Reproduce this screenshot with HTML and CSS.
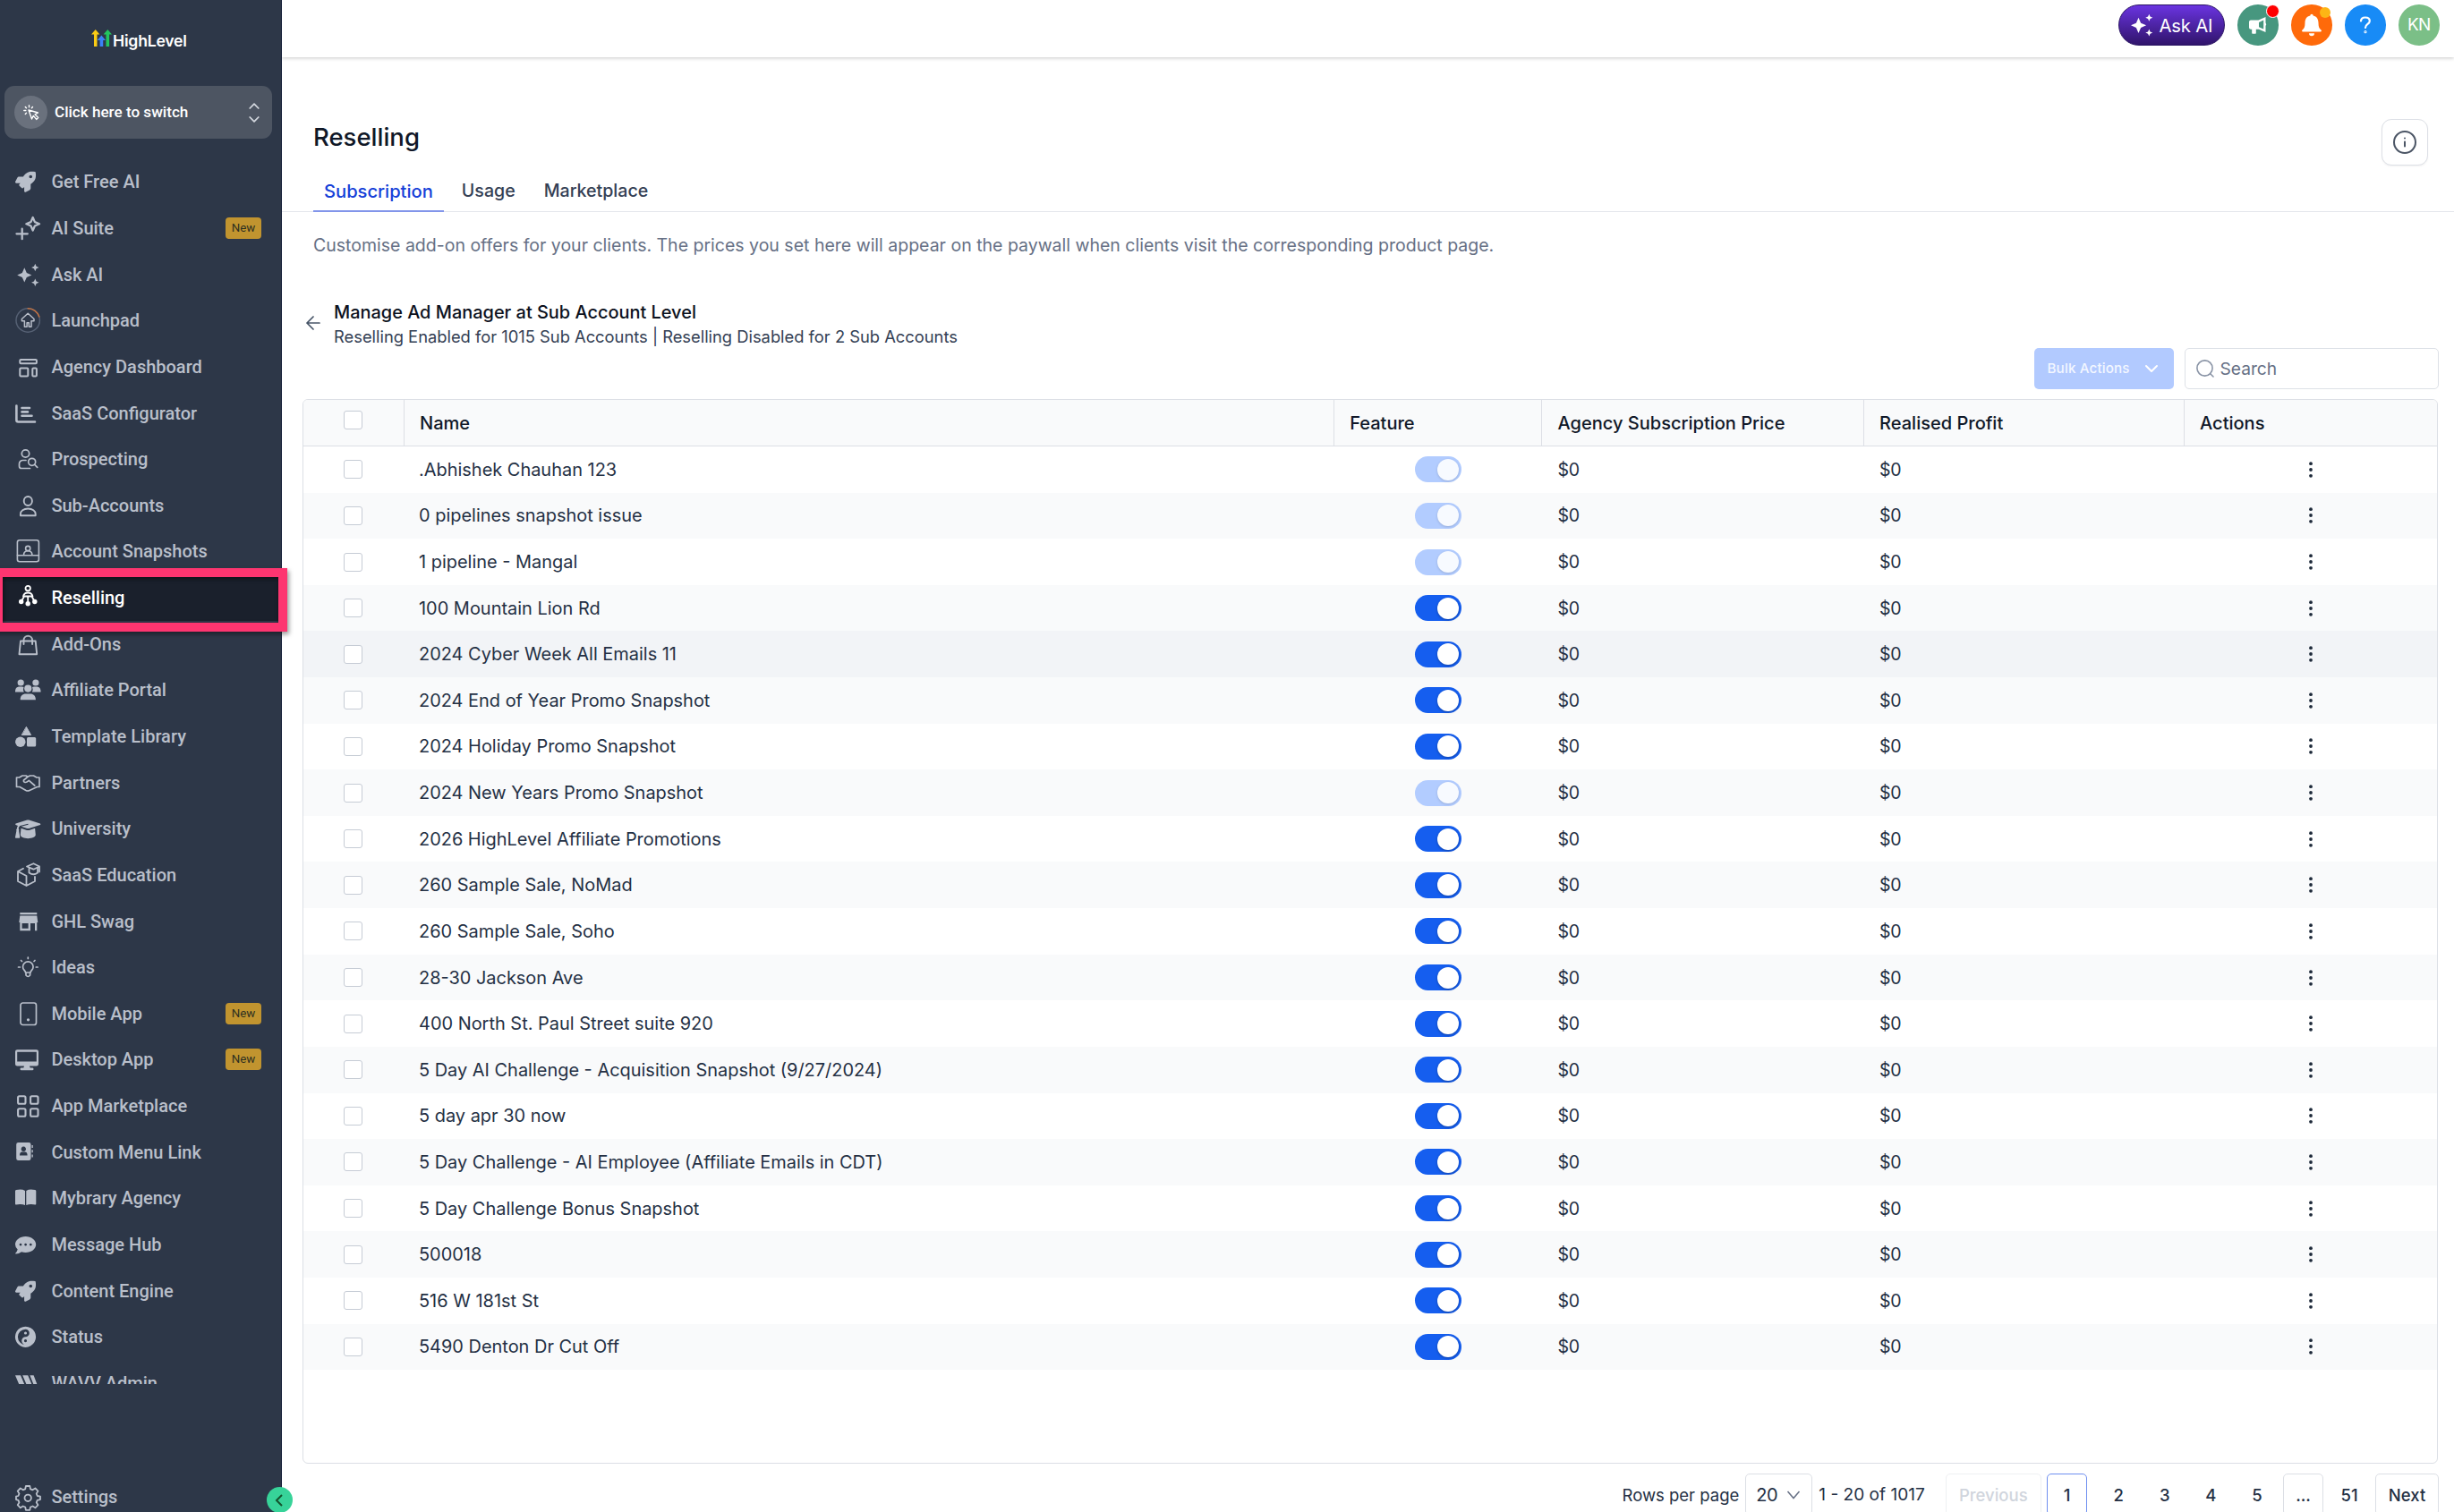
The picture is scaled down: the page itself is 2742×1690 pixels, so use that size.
FILE: index.html
```
<!DOCTYPE html>
<html lang="en">
<head>
    <meta charset="UTF-8">
    <meta name="viewport" content="width=device-width, initial-scale=1.0">
    <title>Reselling</title>
    <link rel="stylesheet" href="styles.css">
</head>
<body>
    <div class="app">
        <aside class="sidebar">
            <div class="logo">
                <svg width="23" height="20" viewBox="0 0 23 20">
                    <path fill="#facc15" d="M0 5.500L4.700 0l4.700 5.500H6.500V19H3V5.500z"/>
                    <path fill="#3b82f6" d="M6.600 12l4.800-5.500 4.600 5.500h-2.800v7H9.600v-7z"/>
                    <path fill="#22c55e" d="M13.600 5.500L18.300 0 23 5.500h-2.900V19h-3.600V5.500z"/>
                </svg>
                <span>HighLevel</span>
            </div>

            <div class="switcher">
                <span class="switcher-icon">
                    <svg width="18" height="18" viewBox="0 0 18 18" fill="none" stroke="#fff" stroke-width="1.400" stroke-linecap="round" stroke-linejoin="round">
                        <path d="M6 6l3.500 10 1.800-3.600 3.400 4 2-1.900-3.600-3.600L16.500 9z"/>
                        <path d="M6.500.8v2M2.300 2.500l1.200 1.300M.8 6.500h2M2.300 10.500l1.200-1.200M10.500 2.500L9.400 3.800"/>
                    </svg>
                </span>
                <span class="switcher-text">Click here to switch</span>
                <svg width="12" height="22" viewBox="0 0 12 22" fill="none" stroke="#d5d9e0" stroke-width="1.700" stroke-linecap="round" stroke-linejoin="round">
                    <path d="M1.200 6L6 1.200 10.800 6M1.200 16L6 20.800 10.800 16"/>
                </svg>
            </div>

            <nav class="menu">
                <a class="item">
                    <svg class="fill" viewBox="0 0 28 28"><path transform="translate(0 2.700) scale(.045)" d="M505.120 19.090c-1.190-5.530-6.660-11-12.210-12.190C460.720 0 435.510 0 410.410 0 307.180 0 245.270 55.200 199.050 128H94.840c-16.350.02-35.560 11.880-42.890 26.480L2.520 253.300A28.400 28.400 0 0 0 0 264a24 24 0 0 0 24 24h103.800l-22.470 22.470c-11.370 11.360-13 32.260 0 45.250l50.900 50.900c11.160 11.190 32.160 13.150 45.280 0L224 384.160V488a24 24 0 0 0 24 24 28.560 28.560 0 0 0 10.700-2.520l98.730-49.390c14.630-7.290 26.510-26.500 26.510-42.860V312.800C456.540 266.490 512 204.390 512 101.700c.08-25.200.08-50.410-6.880-82.610zM384.040 168A40 40 0 1 1 424.050 128a40 40 0 0 1-40.010 40z"/></svg>
                    <span>Get Free AI</span>
                </a>
                <a class="item">
                    <svg viewBox="0 0 28 28" stroke-width="2.300"><path d="M19.700 2l2.200 5.100L27 9.300l-5.100 2.200-2.200 5.100-2.200-5.100-5.100-2.200 5.100-2.200zM7.700 14.700v11.500M1.500 20.300h12.300"/></svg>
                    <span>AI Suite</span>
                    <em class="badge">New</em>
                </a>
                <a class="item">
                    <svg class="fill" viewBox="0 0 28 28"><path d="M10.300 6.300l2.500 5.600 5.600 2.500-5.600 2.500-2.500 5.600-2.500-5.600-5.600-2.500 5.600-2.500zM22.300 1.800l1.300 2.900 2.900 1.300-2.900 1.300-1.300 2.900L21 7.300 18.100 6 21 4.700zM22.300 18.500l1.300 2.900 2.900 1.300-2.900 1.300-1.300 2.900L21 24l-2.900-1.300 2.900-1.300z"/></svg>
                    <span>Ask AI</span>
                </a>
                <a class="item">
                    <svg viewBox="0 0 28 28" stroke-width="1.500"><circle cx="14.200" cy="14" r="13.200" stroke="#566174"/><path stroke="#c2703f" d="M14.200.8a13.200 13.200 0 0 1 12.600 9.200"/><path d="M14.200 6.300l6.800 6.200v2.200h-3v6.500h-2.700v-4.500h-2.200v4.500h-2.700v-6.500h-3v-2.200z"/></svg>
                    <span>Launchpad</span>
                </a>
                <a class="item">
                    <svg viewBox="0 0 28 28" stroke-width="2"><rect x="5.300" y="6" width="18.600" height="4.200" rx="1"/><rect x="5.300" y="15.500" width="9" height="9" rx="1"/><rect x="19.300" y="15.500" width="4.600" height="9" rx="1"/></svg>
                    <span>Agency Dashboard</span>
                </a>
                <a class="item">
                    <svg viewBox="0 0 28 28" stroke-width="2.600"><path d="M1.400 5.500v16a2 2 0 0 0 2 2H22M7.500 8h8.500M7.500 12.400h6.500M7.500 16.800h11"/></svg>
                    <span>SaaS Configurator</span>
                </a>
                <a class="item">
                    <svg viewBox="0 0 28 28" stroke-width="1.700"><circle cx="11.500" cy="8" r="4.200"/><path d="M12 15.500H8.500a4 4 0 0 0-4 4v2.500q0 2.500 2.500 2.500h9.500"/><circle cx="18.700" cy="17.300" r="4"/><path d="M21.700 20.300l3 3"/></svg>
                    <span>Prospecting</span>
                </a>
                <a class="item">
                    <svg viewBox="0 0 28 28" stroke-width="1.900"><ellipse cx="14.300" cy="9" rx="4.600" ry="5"/><path d="M5.900 25.300v-1.800c0-3.500 3.500-6 8.400-6s8.400 2.500 8.400 6v1.800z"/></svg>
                    <span>Sub-Accounts</span>
                </a>
                <a class="item">
                    <svg viewBox="0 0 28 28" stroke-width="1.600"><rect x="2.400" y="1.800" width="24" height="24" rx="2.500"/><path d="M2.400 18.800h24M9.500 18.500c0-3 2-4.700 4.700-4.700s4.700 1.700 4.700 4.700"/><circle cx="14.200" cy="11" r="2.600"/></svg>
                    <span>Account Snapshots</span>
                </a>
                <a class="item active">
                    <svg viewBox="0 0 28 28" stroke-width="1.800"><circle cx="14.200" cy="3.600" r="2.700"/><path d="M9 12.500c.5-2.500 2.500-4 5.200-4s4.700 1.500 5.200 4M10 12.500L7 18M14.200 12.500v7M18.500 12.500l3 5.500M9 12.500h10.500"/><g fill="currentColor" stroke="none"><circle cx="6.700" cy="18.500" r="2.700"/><circle cx="14.200" cy="20.700" r="2.700"/><circle cx="21.800" cy="18.500" r="2.700"/></g></svg>
                    <span>Reselling</span>
                </a>
                <a class="item">
                    <svg viewBox="0 0 28 28" stroke-width="1.900"><path d="M6 10.500h16.700l1.500 14.700H4.500zM9.500 14V9.500a4.800 4.800 0 0 1 9.600 0V14"/></svg>
                    <span>Add-Ons</span>
                </a>
                <a class="item">
                    <svg class="fill" viewBox="0 0 28 28"><circle cx="6.200" cy="6" r="3.600"/><circle cx="22.900" cy="6" r="3.600"/><circle cx="14.300" cy="12.600" r="4.100"/><path d="M0 16.500c0-4 1.500-6 5-6h2.500q1.500 0 2 .6-1.200 2.700.2 5.400zM28.600 16.500c0-4-1.500-6-5-6h-2.500q-1.500 0-2 .6 1.200 2.700-.2 5.400zM5.700 25.200c0-4.500 2.500-6.700 6-6.700h5.200c3.500 0 6 2.200 6 6.700z"/></svg>
                    <span>Affiliate Portal</span>
                </a>
                <a class="item">
                    <svg class="fill" viewBox="0 0 28 28"><path stroke="currentColor" d="M12.600 3.700l5 8.800h-10z"/><circle cx="5.800" cy="20.300" r="5.700"/><rect x="13" y="15" width="10.200" height="10.400" rx="1.500"/></svg>
                    <span>Template Library</span>
                </a>
                <a class="item">
                    <svg viewBox="0 0 28 28" stroke-width="1.700"><path d="M1.500 8h3L8 6h4l2 1.300L16.500 6h4l3.500 2h3v10.500h-2.500l-8.500 4q-2 1-4 0L5 18.500H1.500zM14 7.300L9.500 11q-.6 2 1.600 2.500 1.600.2 4.200-2.200l6.500 5.700"/></svg>
                    <span>Partners</span>
                </a>
                <a class="item">
                    <svg class="fill" viewBox="0 0 28 28"><path d="M13.300 4.600q1-.4 2 0l12.600 4q1.100.6 0 1.300l-12.600 4q-1 .3-2 0l-6.600-2.100 7.900-2.100-.2-1-9 2.400q-1.700 1.200-1.700 3.100 1.100 1 .4 2.300l1.200 7.300q0 1-.8 1H.7q-.8 0-.7-1l1.400-7.300q-.8-1.300.5-2.300 0-1.800 1.100-3.100L.6 9.900q-1-.7 0-1.300zM6.500 13.800l6.500 2.100q1.300.4 2.600 0l6.500-2.100.7 7.200c0 5.500-17 5.500-17 0z"/></svg>
                    <span>University</span>
                </a>
                <a class="item">
                    <svg viewBox="0 0 28 28" stroke-width="1.800"><path d="M9 6.800L3 10v11l9.500 5 9.500-5v-5M3 10l9.500 5v11M13 4.500l7.500-3.300L27 4.500l-6.500 3.200zM15.500 6v5.500q5 3.500 9.500 0V6M27 4.500v6"/></svg>
                    <span>SaaS Education</span>
                </a>
                <a class="item">
                    <svg class="fill" viewBox="0 0 28 28"><path fill-rule="evenodd" d="M5.300 4h19v2.200h-19zM5.300 7.600h19l1 7.400h-1v9.300H22V16h-5v8.300H5.300V15h-1zM7.600 16v5.700h7V16z"/></svg>
                    <span>GHL Swag</span>
                </a>
                <a class="item">
                    <svg viewBox="0 0 28 28" stroke-width="1.700"><path d="M11.500 20c0-2-3-3-3-6.300a5.800 5.800 0 0 1 11.600 0c0 3.300-3 4.300-3 6.300zM12 20v3q2.300 3 4.600 0v-3M14.300 3v1.500M3.500 14h1.800M23.300 14h1.800M6.500 6.500l1 1M22 6.500l-1 1"/></svg>
                    <span>Ideas</span>
                </a>
                <a class="item">
                    <svg viewBox="0 0 28 28" stroke-width="1.700"><rect x="6" y="2" width="17.500" height="24.500" rx="2.500"/><circle cx="14.500" cy="20.800" r=".8" fill="currentColor"/></svg>
                    <span>Mobile App</span>
                    <em class="badge">New</em>
                </a>
                <a class="item">
                    <svg class="fill" viewBox="0 0 28 28"><path fill-rule="evenodd" d="M2.300 3.300h21.400Q26 3.300 26 5.600v13.700q0 2.300-2.300 2.300H16l.7 2h2.500q1.300 0 1.300 1.300t-1.300 1.300H6.800q-1.300 0-1.300-1.300t1.300-1.300h2.500l.7-2H2.300Q0 21.600 0 19.300V5.600q0-2.300 2.300-2.300zM2.200 5.700v10.700h21.600V5.700z"/></svg>
                    <span>Desktop App</span>
                    <em class="badge">New</em>
                </a>
                <a class="item">
                    <svg viewBox="0 0 28 28" stroke-width="2.100"><rect x="3.100" y="3.300" width="8.400" height="8.400" rx="1.500"/><rect x="17.100" y="3.300" width="8.400" height="8.400" rx="1.500"/><rect x="3.100" y="17.300" width="8.400" height="8.400" rx="1.500"/><rect x="17.100" y="17.300" width="8.400" height="8.400" rx="1.500"/></svg>
                    <span>App Marketplace</span>
                </a>
                <a class="item">
                    <svg class="fill" viewBox="0 0 28 28"><path fill-rule="evenodd" d="M3.500 3h11.700q2.300 0 2.300 2.300v15.400q0 2.300-2.300 2.300H3.500q-2.300 0-2.300-2.300V5.300Q1.200 3 3.500 3zM9.300 7.600a2.700 2.700 0 1 0 .01 0zM5 17.600h8.600q0-4-2.800-4h-3q-2.800 0-2.800 4zM18.500 6h1.300v3h-1.300zM18.500 11.300h1.300v3h-1.300zM18.500 16.600h1.300v3h-1.300z"/></svg>
                    <span>Custom Menu Link</span>
                </a>
                <a class="item">
                    <svg class="fill" viewBox="0 0 28 28"><path d="M11 6v16Q7 20.500 1 21.500q-1 .2-1-1V6.300q0-1 1-1.200Q7.500 3.600 11 6zM12.300 6v16q4-1.500 10-.5 1 .2 1-1V6.300q0-1-1-1.200-6.500-1.500-10 .9z"/></svg>
                    <span>Mybrary Agency</span>
                </a>
                <a class="item">
                    <svg class="fill" viewBox="0 0 28 28"><path fill-rule="evenodd" d="M11.600 5C18 5 23.200 9 23.200 14s-5.200 9-11.600 9q-2.400 0-4.600-.7-3 2.300-6.300 2.300-.8-.2-.3-1 1.800-1.900 2.300-4Q0 17 0 14C0 9 5.200 5 11.600 5zM6 12.700a1.400 1.400 0 1 0 .01 0zM11.600 12.700a1.400 1.400 0 1 0 .01 0zM17.300 12.700a1.400 1.400 0 1 0 .01 0z"/></svg>
                    <span>Message Hub</span>
                </a>
                <a class="item">
                    <svg class="fill" viewBox="0 0 28 28"><path transform="translate(0 2.700) scale(.045)" d="M505.120 19.090c-1.190-5.530-6.660-11-12.210-12.190C460.720 0 435.510 0 410.410 0 307.180 0 245.270 55.200 199.050 128H94.840c-16.350.02-35.560 11.880-42.890 26.480L2.520 253.300A28.400 28.400 0 0 0 0 264a24 24 0 0 0 24 24h103.800l-22.470 22.470c-11.370 11.360-13 32.260 0 45.250l50.900 50.900c11.160 11.190 32.160 13.150 45.280 0L224 384.160V488a24 24 0 0 0 24 24 28.560 28.560 0 0 0 10.700-2.520l98.730-49.390c14.630-7.290 26.510-26.500 26.510-42.860V312.800C456.540 266.490 512 204.390 512 101.700c.08-25.200.08-50.410-6.880-82.610zM384.040 168A40 40 0 1 1 424.050 128a40 40 0 0 1-40.010 40z"/></svg>
                    <span>Content Engine</span>
                </a>
                <a class="item">
                    <svg class="fill" viewBox="0 0 28 28"><path fill-rule="evenodd" d="M11.500 2.700a11.600 11.600 0 1 0 .01 0zM11.500 5.700a4.300 4.300 0 0 1 0 8.600 4.300 4.300 0 0 0 0 8.600 8.600 8.600 0 0 1 0-17.200zM11.500 17a1.600 1.600 0 1 1-.01 0z"/><circle cx="11.500" cy="10" r="1.600"/></svg>
                    <span>Status</span>
                </a>
                <a class="item">
                    <svg class="fill" viewBox="0 0 28 28"><path d="M0 5.300h6l6 14H6zM8.200 5.300h6l6 14h-6zM16.400 5.300h4.200l5.400 14h-4z"/></svg>
                    <span>WAVV Admin</span>
                </a>
            </nav>

            <div class="sidebar-footer">
                <a class="item">
                    <svg viewBox="0 0 28 28" stroke-width="1.800"><path d="M11.900 2h4.400l.7 3.300 2.500 1 2.900-1.800 3.100 3.100-1.800 2.900 1 2.500 3.300.7v3.400l-3.300.8-1 2.400 1.800 2.900-3.100 3.100-2.900-1.800-2.500 1-.7 3.300h-4.400l-.7-3.300-2.500-1-2.900 1.800-3.100-3.100 1.800-2.900-1-2.400-2.500-.8v-3.400l2.500-.7 1-2.500-1.800-2.900 3.100-3.100 2.900 1.800 2.500-1z"/><circle cx="14.200" cy="15.300" r="3.700"/></svg>
                    <span>Settings</span>
                </a>
            </div>

            <div class="highlight"></div>
            <button class="collapse">
                <svg width="10" height="14" viewBox="0 0 10 14" fill="none" stroke="#14532d" stroke-width="2"><path d="M8 1L2 7l6 6"/></svg>
            </button>
        </aside>

        <main class="main">
            <header class="topbar">
                <button class="ask-ai">
                    <svg width="25" height="26" viewBox="0 0 25 26" fill="#fff"><path d="M8.500 4.700l2.600 6 6 2.600-6 2.600-2.600 6-2.600-6-6-2.600 6-2.600zM20.300.8l1.200 2.800 2.800 1.200L21.500 6l-1.200 2.800L19.100 6l-2.800-1.200 2.800-1.200zM20.300 17.600l1.200 2.800 2.800 1.200-2.800 1.200-1.200 2.800-1.200-2.800-2.800-1.200 2.800-1.200z"/></svg>
                    Ask AI
                </button>
                <span class="round green">
                    <svg width="22" height="22" viewBox="0 0 22 22" fill="#fff"><path fill-rule="evenodd" d="M19.500 2v6.500q1.500 1.500 0 3.500v7L12 15.700H8.800V20q0 .8-.8.8H5q-.8 0-.8-.8v-4.300H3q-2 0-2-2V7.500q0-2 2-2h8.500zM17.200 5.600L12 8v5.200l5.200 2.400z"/></svg>
                    <i class="dot red"></i>
                </span>
                <span class="round orange">
                    <svg width="24" height="26" viewBox="0 0 24 26" fill="#fff"><path d="M12 .8q1.700 0 1.700 1.700c4 .9 5.800 4 5.800 8 0 4.500 1 6.500 3 8 .8.800.6 2-.8 2H2.300c-1.400 0-1.600-1.200-.8-2 2-1.500 3-3.500 3-8 0-4 1.800-7.100 5.800-8Q10.300.8 12 .8zM9 22.300h6a3 3 0 0 1-6 0z"/></svg>
                    <i class="dot yellow"></i>
                </span>
                <span class="round blue">
                    <svg width="14" height="20" viewBox="0 0 14 20" fill="none" stroke="#fff" stroke-width="2.200" stroke-linecap="round"><path d="M2 5.500c.2-2.500 2-4 4.800-4s5 1.500 5 4c0 3.500-4.800 3.500-4.800 7.500"/><circle cx="7" cy="17.700" r=".5"/></svg>
                </span>
                <span class="round avatar">KN</span>
            </header>

            <section class="page-head">
                <h1>Reselling</h1>
                <button class="info">
                    <svg width="28" height="28" viewBox="0 0 28 28" fill="none" stroke="#4b5565" stroke-width="2" stroke-linecap="round"><circle cx="14" cy="14" r="12"/><path d="M14 13.500v5M14 9.500v.1"/></svg>
                </button>
            </section>

            <div class="tabs">
                <a class="tab selected">Subscription</a>
                <a class="tab">Usage</a>
                <a class="tab">Marketplace</a>
            </div>

            <p class="description">Customise add-on offers for your clients. The prices you set here will appear on the paywall when clients visit the corresponding product page.</p>

            <section class="manage">
                <svg width="18" height="18" viewBox="0 0 18 18" fill="none" stroke="#475467" stroke-width="1.700" stroke-linecap="round" stroke-linejoin="round"><path d="M16 8H2M9 15L2 8l7-7"/></svg>
                <div>
                    <h2>Manage Ad Manager at Sub Account Level</h2>
                    <p>Reselling Enabled for 1015 Sub Accounts | Reselling Disabled for 2 Sub Accounts</p>
                </div>
            </section>

            <div class="toolbar">
                <button class="bulk">
                    Bulk Actions
                    <svg width="16" height="10" viewBox="0 0 16 10" fill="none" stroke="#fff" stroke-width="2" stroke-linecap="round" stroke-linejoin="round"><path d="M2 2l6 6 6-6"/></svg>
                </button>
                <div class="search">
                    <svg width="20" height="20" viewBox="0 0 20 20" fill="none" stroke="#8a94a6" stroke-width="1.600" stroke-linecap="round"><circle cx="9.500" cy="9.500" r="8.600"/><path d="M15.700 15.700l3.300 3.300"/></svg>
                    Search
                </div>
            </div>

            <div class="table">
                <div class="row head">
                    <div class="check"><span class="checkbox"></span></div>
                    <div>Name</div>
                    <div>Feature</div>
                    <div>Agency Subscription Price</div>
                    <div>Realised Profit</div>
                    <div>Actions</div>
                </div>
                <div id="rows"></div>
            </div>

            <footer class="pagination">
                <span class="label">Rows per page</span>
                <span class="select">20 <svg width="16" height="12" viewBox="0 0 16 12" fill="none" stroke="#667085" stroke-width="1.500"><path d="M1.500 2L8 9.500 14.500 2"/></svg></span>
                <span class="range">1 - 20 of 1017</span>
                <a class="page wide disabled">Previous</a>
                <a class="page current">1</a>
                <a class="page plain">2</a>
                <a class="page plain">3</a>
                <a class="page plain">4</a>
                <a class="page plain">5</a>
                <a class="page">...</a>
                <a class="page plain">51</a>
                <a class="page wide">Next</a>
            </footer>
        </main>
    </div>

    <script>
        const accounts = [
            { name: '.Abhishek Chauhan 123', locked: true },
            { name: '0 pipelines snapshot issue', locked: true },
            { name: '1 pipeline - Mangal', locked: true },
            { name: '100 Mountain Lion Rd' },
            { name: '2024 Cyber Week All Emails 11', hover: true },
            { name: '2024 End of Year Promo Snapshot' },
            { name: '2024 Holiday Promo Snapshot' },
            { name: '2024 New Years Promo Snapshot', locked: true },
            { name: '2026 HighLevel Affiliate Promotions' },
            { name: '260 Sample Sale, NoMad' },
            { name: '260 Sample Sale, Soho' },
            { name: '28-30 Jackson Ave' },
            { name: '400 North St. Paul Street suite 920' },
            { name: '5 Day AI Challenge - Acquisition Snapshot (9/27/2024)' },
            { name: '5 day apr 30 now' },
            { name: '5 Day Challenge - AI Employee (Affiliate Emails in CDT)' },
            { name: '5 Day Challenge Bonus Snapshot' },
            { name: '500018' },
            { name: '516 W 181st St' },
            { name: '5490 Denton Dr Cut Off' }
        ];

        document.getElementById('rows').innerHTML = accounts.map(a => `
            <div class="row${a.hover ? ' hover' : ''}">
                <div class="check"><span class="checkbox"></span></div>
                <div>${a.name}</div>
                <div class="feature"><span class="toggle${a.locked ? ' locked' : ''}"></span></div>
                <div class="money">$0</div>
                <div class="money">$0</div>
                <div class="actions"><svg width="6" height="18" viewBox="0 0 6 18" fill="#1d2939"><circle cx="3" cy="2.200" r="1.900"/><circle cx="3" cy="9" r="1.900"/><circle cx="3" cy="15.800" r="1.900"/></svg></div>
            </div>`).join('');
    </script>
</body>
</html>
```
FILE: styles.css
```
* {
    box-sizing: border-box;
}

body {
    margin: 0;
    font-family: Inter, "Liberation Sans", sans-serif;
    font-size: 20px;
    color: #243044;
    background: #fff;
}

h1, h2, p {
    margin: 0;
}

button {
    font-family: inherit;
    border: 0;
    padding: 0;
}

svg {
    flex: none;
    display: block;
}

.app {
    display: flex;
    height: 1690px;
    overflow: hidden;
}

/* Sidebar */

.sidebar {
    position: relative;
    z-index: 2;
    width: 315px;
    flex: none;
    display: flex;
    flex-direction: column;
    background: #2d3748;
    border-right: 1px solid #16213a;
    font-family: Roboto, sans-serif;
}

.logo {
    display: flex;
    flex: none;
    align-items: flex-start;
    height: 63px;
    margin: 33px 0 0 102px;
    color: #fff;
    font: 600 17.6px/25px Inter, sans-serif;
    letter-spacing: -.2px;
}

.logo span {
    margin-left: 1px;
}

.switcher {
    display: flex;
    flex: none;
    align-items: center;
    width: 299px;
    height: 59px;
    margin-left: 5px;
    padding: 0 14px 0 11px;
    border-radius: 11px;
    background: #4d5562;
}

.switcher-icon {
    display: flex;
    align-items: center;
    justify-content: center;
    width: 37px;
    height: 37px;
    border-radius: 50%;
    background: #6a717d;
}

.switcher-text {
    flex: 1;
    margin-left: 8px;
    padding-bottom: 2px;
    color: #fff;
    font-size: 17.1px;
    font-weight: 500;
}

.menu {
    flex: none;
    height: 1369px;
    margin-top: 22.500px;
    overflow: hidden;
}

.item {
    display: flex;
    align-items: center;
    height: 51.65px;
    padding-left: 17px;
    padding-right: 22px;
    color: #b9bfca;
    font-size: 20px;
    font-weight: 500;
}

.item svg {
    width: 28px;
    height: 28px;
    margin-right: 12.400px;
    overflow: visible;
    fill: none;
    stroke: currentColor;
    stroke-linejoin: round;
    stroke-linecap: round;
}

.item svg.fill {
    fill: currentColor;
    stroke: none;
}

.item.active {
    background: #1a202c;
    color: #fff;
}

.badge {
    margin-left: auto;
    width: 40px;
    height: 24px;
    border-radius: 4px;
    background: #c1942f;
    color: #2d3021;
    font: 400 13.3px/24px Roboto, sans-serif;
    text-align: center;
}

.sidebar-footer {
    flex: none;
    margin-top: 101px;
}

.highlight {
    position: absolute;
    left: -7px;
    top: 635px;
    width: 328px;
    height: 71px;
    border: 10px solid #fd3570;
    box-shadow: 2px 3px 5px rgba(0, 0, 0, .4), inset 1px 2px 5px rgba(0, 0, 0, .5);
}

.collapse {
    position: absolute;
    left: 297.500px;
    top: 1662px;
    display: flex;
    align-items: center;
    justify-content: center;
    width: 29px;
    height: 29px;
    border-radius: 50%;
    background: #37d399;
}

/* Main */

.main {
    flex: 1;
    min-width: 0;
}

.topbar {
    display: flex;
    justify-content: flex-end;
    height: 64px;
    padding: 5px 16.500px 0 0;
    gap: 14.500px;
    box-shadow: 0 1px 4px rgba(0, 0, 0, .22);
}

.ask-ai {
    display: flex;
    align-items: center;
    gap: 7px;
    width: 119px;
    height: 46px;
    padding-left: 13px;
    border: 1px solid #2a1463;
    border-radius: 23px;
    background: linear-gradient(#6a34e0, #30146b);
    color: #fff;
    font-size: 20.300px;
    letter-spacing: -.2px;
    white-space: nowrap;
}

.round {
    position: relative;
    display: flex;
    align-items: center;
    justify-content: center;
    width: 45.500px;
    height: 45.500px;
    border-radius: 50%;
    color: #fff;
}

.green { background: #47977f; }
.orange { background: #ff6a0a; }
.blue { background: #188bf6; }

.avatar {
    background: #7bbf87;
    font-size: 19px;
    letter-spacing: -.8px;
}

.dot {
    position: absolute;
    border-radius: 50%;
}

.dot.red {
    left: 31.500px;
    top: -.5px;
    width: 15px;
    height: 15px;
    border: 1px solid #fff;
    background: #f00;
}

.dot.yellow {
    left: 31.500px;
    top: 3px;
    width: 12px;
    height: 12px;
    background: #fdb515;
}

.page-head {
    display: flex;
    justify-content: space-between;
    margin: 69px 29px 0 35px;
}

h1 {
    color: #101828;
    font-size: 27.500px;
    font-weight: 500;
    line-height: 40.500px;
}

.info {
    display: flex;
    align-items: center;
    justify-content: center;
    width: 52px;
    height: 52px;
    border: 1px solid #dde0e6;
    border-radius: 11px;
    background: #fff;
    box-shadow: 0 1px 2px rgba(16, 24, 40, .06);
}

.tabs {
    display: flex;
    gap: 8px;
    height: 51.500px;
    padding-left: 35px;
    border-bottom: 1.500px solid #e4e7ec;
}

.tab {
    height: 51.500px;
    padding: 15px 12px 0;
    color: #344054;
    font-size: 19.600px;
    font-weight: 500;
    line-height: 27px;
}

.tab.selected {
    border-bottom: 2px solid #8295ea;
    color: #1540d8;
    font-size: 20.150px;
}

.description {
    margin: 23px 0 0 35px;
    color: #667085;
    font-size: 19.510px;
    line-height: 28px;
}

.manage {
    display: flex;
    align-items: center;
    height: 54px;
    margin-top: 47.500px;
    padding-left: 26px;
}

.manage div {
    margin-left: 14px;
}

h2 {
    color: #0c111d;
    font-size: 19.930px;
    font-weight: 500;
    line-height: 28px;
}

.manage p {
    color: #344054;
    font-size: 18.330px;
    line-height: 26px;
}

.toolbar {
    display: flex;
    justify-content: flex-end;
    gap: 12px;
    padding-right: 17.500px;
}

.bulk {
    display: flex;
    align-items: center;
    justify-content: space-between;
    width: 156px;
    height: 46px;
    padding: 0 17px 1px 15px;
    border-radius: 5px;
    background: #b2caff;
    color: #f3f7ff;
    font-size: 15.200px;
    font-weight: 500;
    letter-spacing: .15px;
}

.search {
    display: flex;
    align-items: center;
    gap: 7px;
    width: 284px;
    height: 46px;
    padding-left: 12px;
    border: 1px solid #dde1e7;
    border-radius: 5px;
    color: #667085;
    font-size: 19.200px;
}

.table {
    width: 2386px;
    height: 1190px;
    margin: 11px 0 0 23px;
    border: 1px solid #dcdfe5;
    border-radius: 6px;
    overflow: hidden;
}

.row {
    display: grid;
    grid-template-columns: 111.500px 1039.200px 232.400px 359.500px 358px 1fr;
    height: 51.620px;
}

.row > div {
    display: flex;
    align-items: center;
    padding-left: 17.500px;
    font-size: 19.950px;
}

#rows .row:nth-child(even) {
    background: #f9fafb;
}

#rows .row.hover {
    background: #f2f4f7;
}

.row.head {
    height: 52px;
    background: #f9fafb;
    border-bottom: 1.500px solid #dcdfe5;
}

.row.head > div {
    border-left: 1px solid #dcdfe5;
    padding-left: 17.500px;
    color: #101828;
    font-size: 20.030px;
    font-weight: 500;
}

.row > .check, .row.head > .check {
    padding-left: 45px;
}

.row.head > .check {
    border-left: 0;
    padding-bottom: 7px;
}

.checkbox {
    width: 21px;
    height: 21px;
    border: 1.500px solid #c6ccd5;
    border-radius: 3px;
    background: #fff;
}

.row > .feature {
    padding-left: 91px;
}

.toggle {
    display: flex;
    justify-content: flex-end;
    width: 52px;
    height: 29px;
    padding: 2.500px;
    border-radius: 15px;
    background: #155eef;
}

.toggle::after {
    content: "";
    width: 24px;
    height: 24px;
    border-radius: 50%;
    background: #fff;
    box-shadow: 0 1px 3px rgba(0, 0, 0, .3);
}

.toggle.locked {
    background: #b2ccff;
}

.toggle.locked::after {
    background: #f7faff;
    box-shadow: 0 1px 3px rgba(0, 0, 0, .15);
}

.row > .money {
    padding-left: 18.500px;
    font-size: 19.500px;
    letter-spacing: -.4px;
}

.row > .actions {
    padding-left: 139px;
}

/* Pagination */

.pagination {
    display: flex;
    align-items: center;
    justify-content: flex-end;
    height: 51px;
    margin-top: 9px;
    padding-right: 17px;
    font-size: 18.500px;
}

.label {
    margin-right: 7px;
}

.select {
    display: flex;
    align-items: center;
    justify-content: space-between;
    width: 75px;
    height: 47px;
    padding: 0 12px 0 11px;
    margin-right: 7px;
    border: 1px solid #dcdfe5;
    border-radius: 5px;
    font-size: 20px;
    letter-spacing: -.5px;
}

.range {
    margin-right: 23px;
    font-size: 19.070px;
}

.page {
    display: flex;
    align-items: center;
    justify-content: center;
    width: 45.500px;
    height: 47px;
    margin-left: 6.100px;
    border: 1px solid #dcdfe5;
    border-radius: 5px;
    font-weight: 500;
}

.page.plain {
    border-color: transparent;
}

.page.wide {
    width: 71px;
}

.page.disabled {
    width: 107px;
    margin-left: 0;
    border-color: #eef0f3;
    color: #d0d5dd;
}

.page.current {
    margin-right: 6px;
    border-color: #6f8ff0;
}
```
